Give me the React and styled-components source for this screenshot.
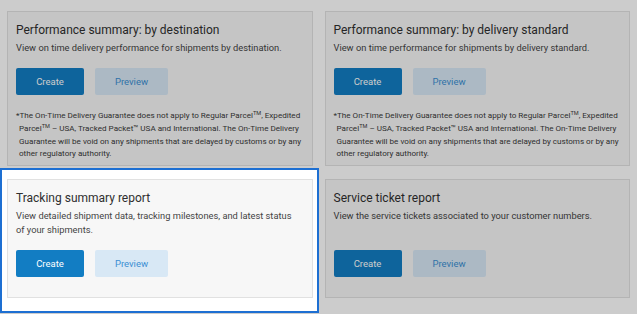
import React from "react";
import styled, { createGlobalStyle } from "styled-components";

const Global = createGlobalStyle`
  html, body { margin: 0; padding: 0; background: #ffffff; }
  body { font-family: Roboto, "Liberation Sans", Arial, sans-serif; }
  * { box-sizing: border-box; }
`;

const Page = styled.div`
  position: relative;
  width: 637px;
  height: 314px;
  overflow: hidden;
  background: #ffffff;
  padding: 11px 7px 0 7px;
`;

const Grid = styled.div`
  display: grid;
  grid-template-columns: 1fr 1fr;
  column-gap: 12px;
  row-gap: 13px;
`;

const Card = styled.section`
  display: flex;
  flex-direction: column;
  background: #f7f7f7;
  border: 1px solid #e1e1e1;
  padding: 11px 8px 6px 8px;
`;

const Title = styled.h2`
  margin: 0;
  font-size: 12px;
  line-height: 15px;
  font-weight: 400;
  color: #2f2f2f;
`;

const Description = styled.p`
  margin: 3px 0 0 0;
  padding-right: 8px;
  font-size: 9.3px;
  line-height: 14px;
  color: #444444;
`;

const ButtonRow = styled.div`
  display: flex;
  gap: 11px;
  margin-top: auto;
  padding-top: 13px;
  margin-bottom: 14px;
`;

const Button = styled.button`
  height: 27px;
  width: ${(p) => (p.$primary ? "68px" : "73px")};
  border: none;
  border-radius: 2px;
  padding: 0;
  font-family: inherit;
  font-size: 9.5px;
  background: ${(p) => (p.$primary ? "#127dc3" : "#d8e8f5")};
  color: ${(p) => (p.$primary ? "#ffffff" : "#3b8fd3")};
  cursor: pointer;
`;

const Footnote = styled.p`
  margin: 0;
  font-size: 8.1px;
  line-height: 12px;
  color: #3a3a3a;
  padding-left: 3px;
  text-indent: -3px;
  padding-right: 2px;
`;

const Sup = styled.span`
  font-size: 5.6px;
  position: relative;
  top: -3px;
`;

const Spotlight = styled.div`
  position: absolute;
  left: 0;
  top: 168px;
  width: 319px;
  height: 145px;
  border: 2px solid #1d6fd2;
  box-shadow: 0 0 0 2000px rgba(0, 0, 0, 0.2);
  pointer-events: none;
`;

const footnote = (
  <Footnote>
    *The On-Time Delivery Guarantee does not apply to Regular Parcel<Sup>TM</Sup>, Expedited
    Parcel<Sup>TM</Sup> – USA, Tracked Packet™ USA and International. The On-Time Delivery
    Guarantee will be void on any shipments that are delayed by customs or by any other
    regulatory authority.
  </Footnote>
);

const reports = [
  {
    title: "Performance summary: by destination",
    desc: "View on time delivery performance for shipments by destination.",
    note: true,
  },
  {
    title: "Performance summary: by delivery standard",
    desc: "View on time performance for shipments by delivery standard.",
    note: true,
  },
  {
    title: "Tracking summary report",
    desc: "View detailed shipment data, tracking milestones, and latest status of your shipments.",
  },
  {
    title: "Service ticket report",
    desc: "View the service tickets associated to your customer numbers.",
  },
];

export default function App() {
  return (
    <>
      <Global />
      <Page>
        <Grid>
          {reports.map((r) => (
            <Card key={r.title}>
              <Title>{r.title}</Title>
              <Description>{r.desc}</Description>
              <ButtonRow>
                <Button $primary>Create</Button>
                <Button>Preview</Button>
              </ButtonRow>
              {r.note && footnote}
            </Card>
          ))}
        </Grid>
        <Spotlight />
      </Page>
    </>
  );
}
